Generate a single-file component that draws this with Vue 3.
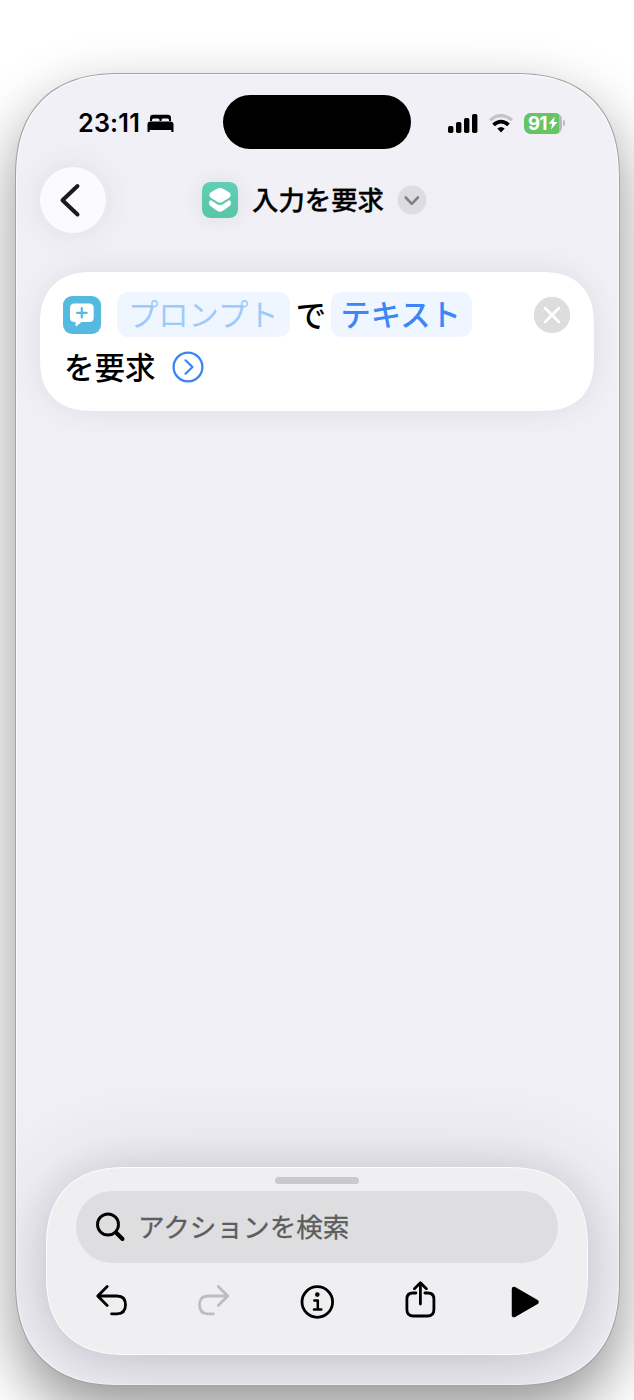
<script setup>
const bars = [
  { x: 0, h: 7 },
  { x: 8, h: 11 },
  { x: 16, h: 15 },
  { x: 24, h: 19 },
]
</script>

<template>
  <main class="stage">
    <section class="phone">
      <header class="status">
        <div class="clock">
          <span class="time">23:11</span>
          <svg class="bed" width="27" height="19" viewBox="0 0 27 19">
            <path d="M3 7V4Q3 .8 6 .8H21Q24 .8 24 4V7H22V6Q22 4.5 20.5 4.5H16Q14.5 4.5 14.5 6V7H12.500V6Q12.500 4.500 11 4.500H6.500Q5 4.500 5 6V7Z" />
            <path d="M.5 18V10.500Q.5 7.500 3.500 7.500H23.500Q26.500 7.500 26.500 10.500V18H24.300V16H2.700V18Z" />
          </svg>
        </div>
        <div class="island"></div>
        <div class="signals">
          <svg width="30" height="19" viewBox="0 0 30 19">
            <rect v-for="b in bars" :key="b.x" :x="b.x" :y="19 - b.h" width="5.4" :height="b.h" rx="1.7" />
          </svg>
          <svg class="wifi" width="26" height="19" viewBox="0 0 26 19">
            <path d="M2 6.200Q13-3.200 24 6.200" fill="none" stroke="#c4c4c8" stroke-width="3.200" />
            <path d="M5.500 10.800Q13 4.300 20.500 10.800" fill="none" stroke="#000" stroke-width="3.700" />
            <path d="M9.300 14.600Q13 11.200 16.700 14.600L13 18.600Z" />
          </svg>
          <div class="battery">
            <div class="level">
              <span>91</span>
              <svg width="10" height="14" viewBox="0 0 9 13"><path d="M6.200 .5L.4 7.300H3.700L2.700 12.500L8.700 5.500H5.200Z" fill="#fff" /></svg>
            </div>
            <i class="nub"></i>
          </div>
        </div>
      </header>

      <nav class="nav">
        <button class="back" aria-label="戻る">
          <svg width="66" height="66" viewBox="0 0 66 66"><path d="M37.500 19L22.500 33.200L37.500 47.500" fill="none" stroke="#1b1a20" stroke-width="4" stroke-linecap="round" stroke-linejoin="round" /></svg>
        </button>
        <div class="title">
          <svg class="app" width="36" height="36" viewBox="0 0 36 36">
            <defs><linearGradient id="mint" x1="0" y1="0" x2="0" y2="1"><stop stop-color="#60cfb5" /><stop offset="1" stop-color="#5ac5a8" /></linearGradient></defs>
            <rect width="36" height="36" rx="8" fill="url(#mint)" />
            <path d="M16 6.200Q18 5.200 20 6.200L27 10.200Q30.500 13 27 15.800L20.500 20Q18 21.300 15.500 20L9 15.800Q5.500 13 9 10.200Z" fill="#fff" />
            <path d="M8.700 18L15.500 22.400Q18 23.600 20.500 22.400L27.300 18Q30.800 20.700 27.500 24L20.500 29Q18 30.300 15.500 29L8.500 24Q5.200 20.700 8.700 18Z" fill="#fff" />
          </svg>
          <h1>入力を要求</h1>
          <svg class="more" width="30" height="30" viewBox="0 0 30 30"><circle cx="15" cy="15" r="14.500" fill="#dddce1" /><path d="M8.700 12.500L14.800 18.800L20.900 12.500" fill="none" stroke="#828187" stroke-width="2.600" stroke-linecap="round" stroke-linejoin="round" /></svg>
        </div>
      </nav>

      <article class="card">
        <div class="row first">
          <svg class="ask" width="38" height="38" viewBox="0 0 38 38">
            <rect width="38" height="38" rx="9" fill="#55bae0" />
            <path d="M11.500 7.500H26Q30.700 7.500 30.700 12V21.500Q30.700 26 26 26H18.500L13.700 30Q12.500 30.800 12.500 29.300V26H11.500Q7 26 7 21.500V12Q7 7.500 11.500 7.500Z" fill="#fff" />
            <path d="M18.800 12V21.600M14 16.800H23.600" stroke="#55bae0" stroke-width="2.200" stroke-linecap="round" />
          </svg>
          <span class="token prompt">プロンプト</span>
          <span class="de">で</span>
          <span class="token kind">テキスト</span>
          <svg class="close" width="38" height="38" viewBox="0 0 38 38"><circle cx="19" cy="19" r="18.200" fill="#dddddf" /><path d="M12 12L26 26M26 12L12 26" stroke="#fff" stroke-width="2.600" stroke-linecap="round" /></svg>
        </div>
        <div class="row second">
          <span>を要求</span>
          <svg width="32" height="32" viewBox="0 0 32 32" fill="none" stroke="#3b84f7" stroke-linecap="round" stroke-linejoin="round"><circle cx="16" cy="16" r="14.400" stroke-width="2.300" /><path d="M13.500 9.300L20.500 16L13.500 22.700" stroke-width="2.200" /></svg>
        </div>
      </article>

      <footer class="sheet">
        <i class="grabber"></i>
        <div class="search">
          <svg width="32" height="32" viewBox="0 0 32 32" fill="none" stroke="#000" stroke-linecap="round"><circle cx="13" cy="13.500" r="10.500" stroke-width="2.900" /><path d="M21 21.500L27.500 28" stroke-width="4" /></svg>
          <span>アクションを検索</span>
        </div>
        <div class="tools">
          <svg width="40" height="40" viewBox="0 0 40 40"><path d="M16.200 6.500L6.700 16L16.200 25.500M7.500 16H26Q34.500 16 34.500 24.800Q34.500 33.800 26 33.800H20.500" /></svg>
          <svg class="off" width="40" height="40" viewBox="0 0 40 40"><path d="M24.300 6.500L33.800 16L24.300 25.500M33 16H14Q5.500 16 5.500 24.800Q5.500 33.800 14 33.800H19.500" /></svg>
          <svg width="40" height="40" viewBox="0 0 40 40"><circle cx="20.300" cy="22" r="15.300" /><path d="M17.300 20.500H20.800V29.300M17 29.500H24.300" stroke-width="2.500" /><circle cx="20.300" cy="14.600" r="2.300" fill="#000" stroke="none" /></svg>
          <svg width="40" height="40" viewBox="0 0 40 40"><path d="M15.500 13H12.500Q6.500 13 6.500 19V29.500Q6.500 36 13 36H27Q33.500 36 33.500 29.500V19Q33.500 13 27.500 13H24.500M20 24V3M14 8.700L20 2.700L26 8.700" transform="translate(.4)" /></svg>
          <svg width="40" height="40" viewBox="0 0 40 40"><path d="M11 9L33.500 22L11 35Z" fill="#000" class="play" /></svg>
        </div>
      </footer>
    </section>
  </main>
</template>

<style>
html, body { margin: 0; background: #fff; }
</style>

<style scoped>
* { box-sizing: border-box; }
.stage {
  height: 1400px;
  padding: 73px 14px 0 15px;
  overflow: hidden;
  background: #fff;
  font-family: "Inter", "Noto Sans CJK JP", sans-serif;
  color: #000;
}
svg { display: block; flex: none; }
.phone {
  width: 605px;
  height: 1313px;
  display: flex;
  flex-direction: column;
  border-radius: 91px;
  border: 1px solid #a2a2a4;
  background: #f1f0f6;
  box-shadow: inset 0 0 0 1px #faf9fd, 0 26px 60px rgba(0, 0, 0, .42);
  overflow: hidden;
}
.status {
  height: 92px;
  flex: none;
  display: grid;
  grid-template-columns: 207px 188px 1fr;
  padding-top: 21px;
}
.clock { display: flex; align-items: center; height: 56px; padding-left: 62px; }
.time { font-size: 25.2px; font-weight: 600; width: 69px; letter-spacing: .2px; }
.island { height: 54px; border-radius: 27px; background: #000; }
.signals { display: flex; align-items: center; height: 56px; padding-left: 37px; }
.wifi { margin-left: 10px; }
.battery { display: flex; align-items: center; margin-left: 10px; }
.level {
  width: 38px;
  height: 21px;
  border-radius: 6.5px;
  display: flex;
  align-items: center;
  padding-left: 4px;
  background: linear-gradient(90deg, #65c466 35px, #b9b8bf 35px);
  color: #fff;
  font-size: 18.5px;
  line-height: 21px;
  font-weight: 650;
}
.level span { width: 20px; letter-spacing: -.5px; }
.nub { width: 2px; height: 6px; margin-left: 1px; border-radius: 0 2px 2px 0; background: #bcbbc1; }
.nav { height: 106px; flex: none; display: flex; padding: 1px 0 0 23.5px; }
.back {
  width: 66px;
  height: 66px;
  border: 0;
  padding: 0;
  border-radius: 50%;
  background: #fafaff;
  box-shadow: 0 0 34px rgba(60, 60, 80, .1);
}
.title { display: flex; align-items: center; height: 66px; margin-left: 96.5px; }
.app { border-radius: 8px; box-shadow: 0 0 20px rgba(60, 60, 80, .1); }
h1 { margin: -2px 0 0 14px; width: 144.5px; font-size: 26.4px; line-height: 36px; font-weight: 500; white-space: nowrap; font-family: "Noto Sans CJK JP", sans-serif; -webkit-text-stroke: .3px #000; }
.card {
  width: 554px;
  height: 139px;
  flex: none;
  margin-left: 24px;
  padding: 20px 23px 0;
  border-radius: 42px;
  background: #fff;
  box-shadow: 0 0 32px rgba(60, 60, 80, .1);
  font-size: 30.3px;
  font-weight: 500;
  font-family: "Noto Sans CJK JP", sans-serif;
}
.row { display: flex; align-items: center; white-space: nowrap; }
.first { height: 45px; }
.token { height: 45px; line-height: 43px; border-radius: 11px; background: #eff6ff; }
.prompt { width: 174px; margin-left: 16px; padding-left: 11px; color: #9dcafa; font-weight: 400; }
.de { width: 41px; padding-left: 6px; line-height: 42px; margin-top: -2px; }
.kind { width: 142px; padding-left: 10px; color: #3b87f8; }
.close { margin-left: 61.5px; }
.second { height: 60px; padding-left: 1px; font-size: 30.5px; }
.second span { margin-top: -2px; }
.second svg { margin-left: 16px; }
.sheet {
  width: 542px;
  height: 188px;
  flex: none;
  margin: auto 0 30px 30px;
  padding: 10px 30px 0;
  border-radius: 70px;
  background: #efeff2;
  border: 1px solid #fcfcfe;
  box-shadow: 0 4px 36px rgba(45, 45, 60, .14), 0 8px 110px rgba(45, 45, 60, .16);
}
.grabber { display: block; width: 84px; height: 7px; margin: -1px auto 7px; border-radius: 4px; background: #cacacc; }
.search {
  width: 482px;
  height: 72px;
  margin-left: -1px;
  display: flex;
  align-items: center;
  padding-left: 19px;
  border-radius: 36px;
  background: #dedee0;
  color: #5d5d60;
  font: 400 26.6px "Noto Sans CJK JP", sans-serif;
  -webkit-text-stroke: .3px #5d5d60;
}
.search span { margin: -3px 0 0 11px; }
.tools { display: flex; gap: 63px; padding: 17px 0 0 14px; }
.tools svg { fill: none; stroke: #000; stroke-width: 2.8; stroke-linecap: round; stroke-linejoin: round; }
.tools .off { stroke: #bdbdc0; }
.tools .play { stroke-width: 4.5; }
@supports (corner-shape: superellipse(1.25)) {
  .phone { border-radius: 105px; corner-shape: superellipse(1.25); }
  .card { border-radius: 52px; corner-shape: superellipse(1.25); }
  .sheet { border-radius: 80px; corner-shape: superellipse(1.25); }
}
</style>
